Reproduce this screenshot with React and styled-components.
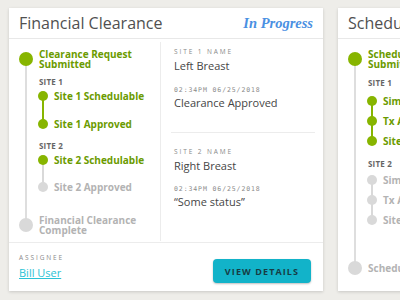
import React from "react";
import styled, { createGlobalStyle } from "styled-components";

const GREEN = "#87b500";
const GREEN_TEXT = "#6b9b00";
const GREY_DOT = "#d9d9d9";
const GREY_TEXT = "#b3b3b3";
const FONT = `"Open Sans", "Noto Sans", sans-serif`;

const Global = createGlobalStyle`
  *, *::before, *::after { box-sizing: border-box; }
  html, body { margin: 0; padding: 0; }
  body {
    background: #eeede9;
    width: 400px;
    height: 300px;
    overflow: hidden;
    font-family: ${FONT};
  }
`;

const Page = styled.div`
  padding: 8px 0 0 9px;
`;

const Row = styled.div`
  display: flex;
  gap: 15px;
  height: 283px;
  width: 700px;
`;

const Card = styled.section`
  width: 314px;
  flex: none;
  background: #fff;
  box-shadow: 0 1px 3px rgba(0, 0, 0, 0.16);
  display: flex;
  flex-direction: column;
`;

const Header = styled.header`
  height: 31px;
  padding: 0 10px;
  border-bottom: 1px solid #e8e8e8;
  display: flex;
  align-items: center;
  justify-content: space-between;
`;

const Title = styled.h2`
  margin: 0;
  font-family: ${FONT};
  font-weight: 400;
  font-size: 16px;
  color: #505050;
  white-space: nowrap;
`;

const Status = styled.span`
  font-family: "Liberation Serif", "DejaVu Serif", serif;
  font-style: italic;
  font-weight: 700;
  font-size: 14.5px;
  color: #4a90e2;
`;

const Body = styled.div`
  flex: 1;
  display: flex;
`;

const LeftCol = styled.div`
  width: 152px;
  flex: none;
  margin: 3px 0 1px;
  padding: 7px 0 ${(p) => p.$padBottom}px 10px;
  border-right: ${(p) => (p.$divider ? "1px solid #ececec" : "none")};
  display: flex;
  flex-direction: column;
`;

const Timeline = styled.div`
  position: relative;
  flex: 1;
  display: flex;
  flex-direction: column;
  &::before {
    content: "";
    position: absolute;
    left: 6px;
    top: 10px;
    bottom: 10px;
    width: 2px;
    background: #dedede;
  }
`;

const MainStep = styled.div`
  position: relative;
  display: flex;
  align-items: center;
  gap: 6px;
  min-height: 20px;
  margin-top: ${(p) => (p.$last ? "auto" : "0")};
`;

const BigDot = styled.span`
  width: 14px;
  height: 14px;
  border-radius: 50%;
  flex: none;
  background: ${(p) => (p.$done ? GREEN : GREY_DOT)};
`;

const StepText = styled.span`
  font-family: ${FONT};
  font-weight: 700;
  font-size: 10px;
  line-height: 10px;
  max-width: 106px;
  color: ${(p) => (p.$done ? GREEN_TEXT : GREY_TEXT)};
  white-space: ${(p) => (p.$nowrap ? "nowrap" : "normal")};
`;

const SiteGroup = styled.div`
  margin-left: 19px;
  margin-top: ${(p) => p.$mt}px;
`;

const SiteLabel = styled.div`
  padding-left: 1px;
  font-family: ${FONT};
  font-weight: 700;
  font-size: 8px;
  line-height: 10px;
  color: #666;
  letter-spacing: 0.2px;
`;

const SubList = styled.div`
  position: relative;
  display: flex;
  flex-direction: column;
  gap: ${(p) => p.$gap}px;
  margin-top: ${(p) => p.$mt}px;
  &::before {
    content: "";
    position: absolute;
    left: 4px;
    top: 7px;
    bottom: 7px;
    width: 2px;
    background: ${(p) => (p.$done ? GREEN : GREY_DOT)};
  }
`;

const SubStep = styled.div`
  position: relative;
  display: flex;
  align-items: center;
  gap: 6px;
  height: 14px;
`;

const SmallDot = styled.span`
  width: 10px;
  height: 10px;
  border-radius: 50%;
  flex: none;
  background: ${(p) => (p.$done ? GREEN : GREY_DOT)};
`;

const SubText = styled.span`
  font-family: ${FONT};
  font-weight: 700;
  font-size: 10px;
  white-space: nowrap;
  color: ${(p) => (p.$done ? GREEN_TEXT : GREY_TEXT)};
`;

const RightCol = styled.div`
  flex: 1;
  padding: 8px 8px 0 13px;
`;

const InfoBlock = styled.div`
  display: flex;
  flex-direction: column;
`;

const MiniLabel = styled.div`
  font-family: ${(p) => (p.$mono ? `"DejaVu Sans Mono", monospace` : FONT)};
  font-size: 6.5px;
  line-height: 10px;
  letter-spacing: ${(p) => (p.$mono ? "0.9px" : "1.9px")};
  color: #8a8a8a;
  margin-top: ${(p) => p.$mt || 0}px;
  text-transform: uppercase;
`;

const Value = styled.div`
  font-family: ${FONT};
  font-size: 11px;
  line-height: 16px;
  color: #454545;
  margin-top: ${(p) => p.$mt || 0}px;
`;

const InfoDivider = styled.hr`
  border: none;
  border-top: 1px solid #ececec;
  margin: 21px 0 14px -3px;
`;

const Footer = styled.footer`
  border-top: 1px solid #ececec;
  padding: 10px 12px 8px 10px;
  display: flex;
  align-items: flex-end;
  justify-content: space-between;
`;

const Assignee = styled.div`
  display: flex;
  flex-direction: column;
  gap: 3px;
  margin-bottom: 3px;
`;

const AssigneeLink = styled.a`
  font-family: ${FONT};
  font-size: 11px;
  line-height: 14px;
  color: #2bc3d5;
  text-decoration: underline;
  cursor: pointer;
`;

const ViewButton = styled.button`
  width: 98px;
  height: 24px;
  border: none;
  border-radius: 4px;
  background: #12b3c9;
  box-shadow: 0 1px 2px rgba(0, 0, 0, 0.25);
  font-family: ${FONT};
  font-weight: 700;
  font-size: 9px;
  letter-spacing: 1.1px;
  color: #173c44;
  cursor: pointer;
  padding: 0;
`;

function Site({ label, steps, gap, labelMt, listMt }) {
  const allDone = steps.every((s) => s.done);
  return (
    <SiteGroup $mt={labelMt}>
      <SiteLabel>{label}</SiteLabel>
      <SubList $gap={gap} $mt={listMt} $done={allDone}>
        {steps.map((s) => (
          <SubStep key={s.text}>
            <SmallDot $done={s.done} />
            <SubText $done={s.done}>{s.text}</SubText>
          </SubStep>
        ))}
      </SubList>
    </SiteGroup>
  );
}

export default function App() {
  return (
    <>
      <Global />
      <Page>
        <Row>
          <Card>
            <Header>
              <Title>Financial Clearance</Title>
              <Status>In Progress</Status>
            </Header>
            <Body>
              <LeftCol $divider $padBottom={6}>
                <Timeline>
                  <MainStep>
                    <BigDot $done />
                    <StepText $done>Clearance Request Submitted</StepText>
                  </MainStep>
                  <Site
                    label="SITE 1"
                    labelMt={8}
                    listMt={2}
                    gap={14}
                    steps={[
                      { text: "Site 1 Schedulable", done: true },
                      { text: "Site 1 Approved", done: true },
                    ]}
                  />
                  <Site
                    label="SITE 2"
                    labelMt={10}
                    listMt={2}
                    gap={13}
                    steps={[
                      { text: "Site 2 Schedulable", done: true },
                      { text: "Site 2 Approved", done: false },
                    ]}
                  />
                  <MainStep $last>
                    <BigDot />
                    <StepText>Financial Clearance Complete</StepText>
                  </MainStep>
                </Timeline>
              </LeftCol>
              <RightCol>
                <InfoBlock>
                  <MiniLabel>Site 1 Name</MiniLabel>
                  <Value $mt={1}>Left Breast</Value>
                  <MiniLabel $mono $mt={11}>02:34PM 06/25/2018</MiniLabel>
                  <Value>Clearance Approved</Value>
                </InfoBlock>
                <InfoDivider />
                <InfoBlock>
                  <MiniLabel>Site 2 Name</MiniLabel>
                  <Value $mt={1}>Right Breast</Value>
                  <MiniLabel $mono $mt={10}>02:34PM 06/25/2018</MiniLabel>
                  <Value>“Some status”</Value>
                </InfoBlock>
              </RightCol>
            </Body>
            <Footer>
              <Assignee>
                <MiniLabel>Assignee</MiniLabel>
                <AssigneeLink>Bill User</AssigneeLink>
              </Assignee>
              <ViewButton>VIEW DETAILS</ViewButton>
            </Footer>
          </Card>

          <Card>
            <Header>
              <Title>Scheduling</Title>
            </Header>
            <Body>
              <LeftCol $padBottom={12}>
                <Timeline>
                  <MainStep>
                    <BigDot $done />
                    <StepText $done>Scheduling Request Submitted</StepText>
                  </MainStep>
                  <Site
                    label="SITE 1"
                    labelMt={9}
                    listMt={6}
                    gap={6}
                    steps={[
                      { text: "Sim Scheduled", done: true },
                      { text: "Tx Approved", done: true },
                      { text: "Site 1 Scheduled", done: true },
                    ]}
                  />
                  <Site
                    label="SITE 2"
                    labelMt={11}
                    listMt={4}
                    gap={6}
                    steps={[
                      { text: "Sim Scheduled", done: false },
                      { text: "Tx Approved", done: false },
                      { text: "Site 2 Scheduled", done: false },
                    ]}
                  />
                  <MainStep $last>
                    <BigDot />
                    <StepText $nowrap>Scheduling Complete</StepText>
                  </MainStep>
                </Timeline>
              </LeftCol>
            </Body>
          </Card>
        </Row>
      </Page>
    </>
  );
}
